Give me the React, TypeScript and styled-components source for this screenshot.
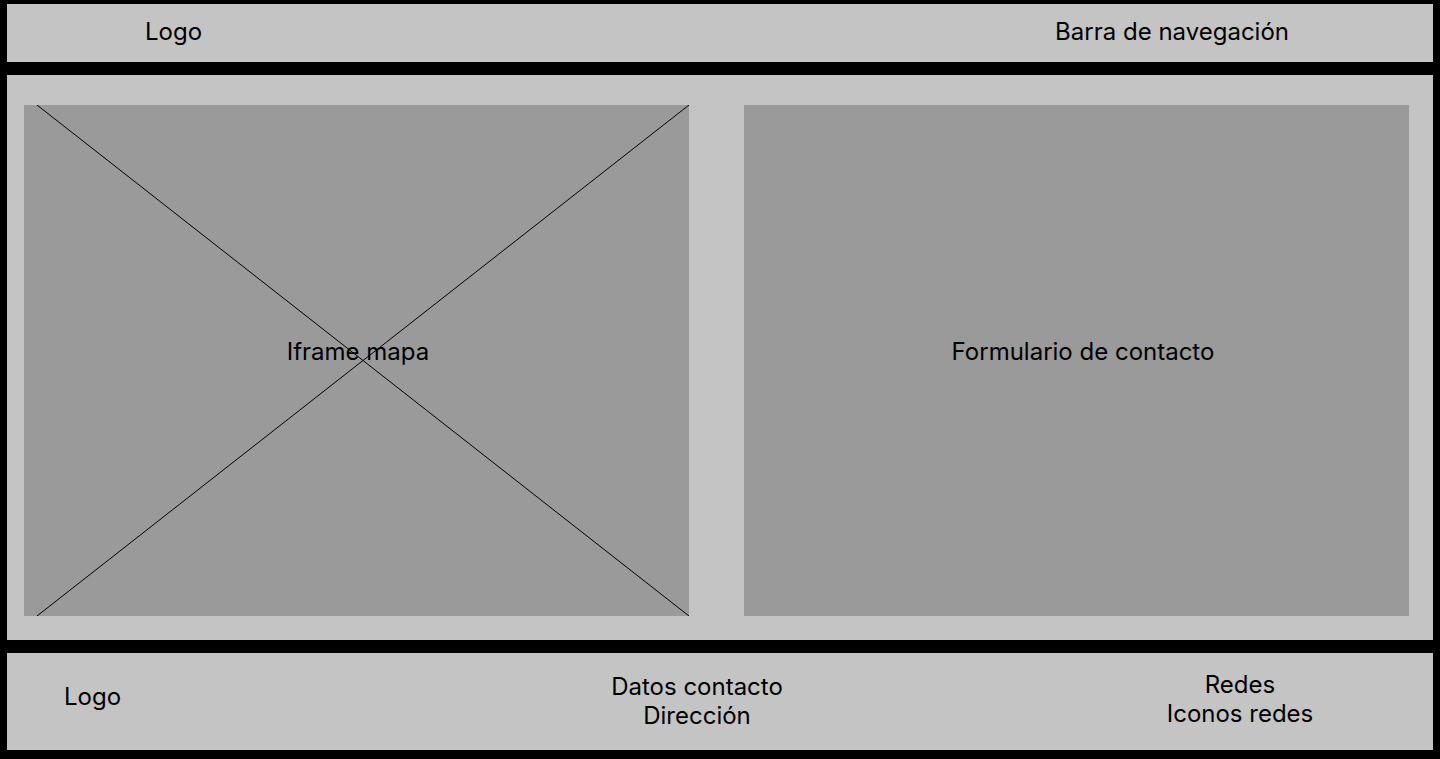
import styled, { createGlobalStyle } from "styled-components";

const GlobalStyles = createGlobalStyle`
  html, body {
    margin: 0;
    background: #000;
  }
  body {
    font-family: Inter, "Noto Sans", sans-serif;
    font-size: 24px;
    color: #000;
  }
  *, *:before, *:after {
    box-sizing: border-box;
  }
`;

const Page = styled.div`
  width: 1440px;
  height: 759px;
  padding: 4px 7px 9px 7px;
  display: flex;
  flex-direction: column;
  gap: 13px;
`;

const Header = styled.header`
  height: 58px;
  background: #c4c4c4;
  display: flex;
  align-items: center;
  justify-content: space-between;
  padding: 0 144px 4px 138px;
`;

const Main = styled.main`
  height: 565px;
  background: #c4c4c4;
  display: grid;
  grid-template-columns: 665px 665px;
  column-gap: 55px;
  padding: 30px 24px 24px 17px;
`;

const Placeholder = styled.div<{ $shift?: number }>`
  position: relative;
  background: #9a9a9a;
  display: flex;
  align-items: center;
  justify-content: center;
  padding: 0 0 19px ${(p) => p.$shift ?? 0}px;
`;

const Cross = styled.svg`
  position: absolute;
  top: 0;
  left: 13px;
  width: 652px;
  height: 100%;
`;

const Label = styled.span`
  position: relative;
`;

const Footer = styled.footer`
  height: 97px;
  background: #c4c4c4;
  display: grid;
  grid-template-columns: 340px 700px 386px;
  align-items: center;
`;

const FooterCol = styled.div<{ $align: "left" | "center"; $lift: number }>`
  text-align: ${(p) => p.$align};
  line-height: 29px;
  padding-left: ${(p) => (p.$align === "left" ? "57px" : "0")};
  padding-bottom: ${(p) => p.$lift}px;
`;

export default function App() {
  return (
    <Page>
      <GlobalStyles />
      <Header>
        <span>Logo</span>
        <span>Barra de navegación</span>
      </Header>
      <Main>
        <Placeholder $shift={3}>
          <Cross viewBox="0 0 652 511" preserveAspectRatio="none">
            <line x1="0" y1="0" x2="652" y2="511" stroke="#000" strokeWidth="1" />
            <line x1="652" y1="0" x2="0" y2="511" stroke="#000" strokeWidth="1" />
          </Cross>
          <Label>Iframe mapa</Label>
        </Placeholder>
        <Placeholder $shift={13}>
          <Label>Formulario de contacto</Label>
        </Placeholder>
      </Main>
      <Footer>
        <FooterCol $align="left" $lift={10}>
          Logo
        </FooterCol>
        <FooterCol $align="center" $lift={2}>
          Datos contacto
          <br />
          Dirección
        </FooterCol>
        <FooterCol $align="center" $lift={6}>
          Redes
          <br />
          Iconos redes
        </FooterCol>
      </Footer>
    </Page>
  );
}
